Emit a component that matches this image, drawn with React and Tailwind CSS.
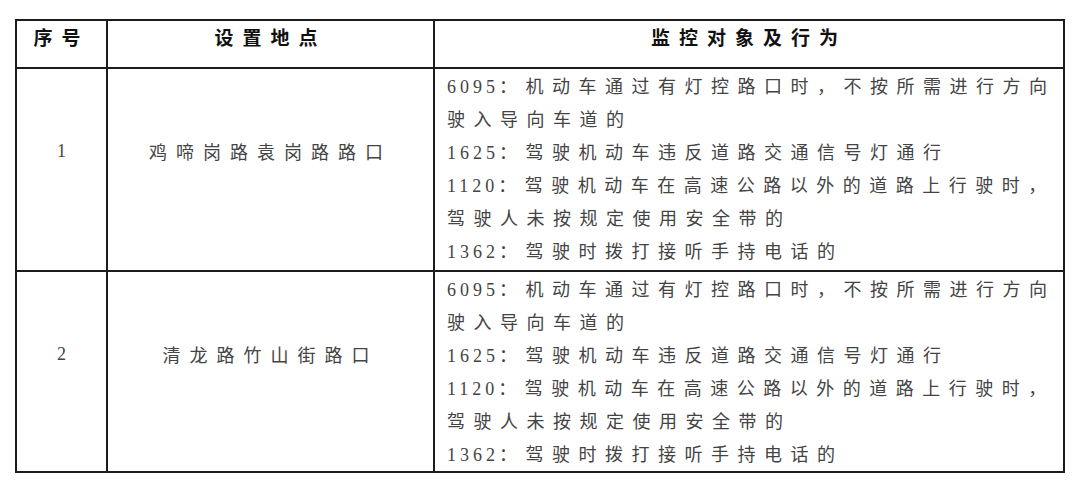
import React from "react";

const CJK = { fontFamily: '"Noto Sans CJK SC", "Noto Sans", sans-serif' };

function Line({ code, text }) {
  return (
    <div className="h-[33px] leading-[33px] whitespace-nowrap">
      {code ? (
        <>
          <span className="font-['Liberation_Serif',serif] text-[18px] tracking-[4px]">{code}</span>
          <span className="tracking-[8.5px]">：</span>
        </>
      ) : null}
      <span className="tracking-[8.5px]">{text}</span>
    </div>
  );
}

const rows = [
  { no: "1", place: "鸡啼岗路袁岗路路口", pb: "pb-[3px]" },
  { no: "2", place: "清龙路竹山街路口", pb: "pb-[1px]" },
];

const lines = [
  { code: "6095", text: "机动车通过有灯控路口时，不按所需进行方向" },
  { code: null, text: "驶入导向车道的" },
  { code: "1625", text: "驾驶机动车违反道路交通信号灯通行" },
  { code: "1120", text: "驾驶机动车在高速公路以外的道路上行驶时，" },
  { code: null, text: "驾驶人未按规定使用安全带的" },
  { code: "1362", text: "驾驶时拨打接听手持电话的" },
];

export default function App() {
  return (
    <div className="w-[1080px] h-[492px] bg-white pt-[19px] pl-[15px]" style={CJK}>
      <div className="w-[1050px] border-2 border-[#1c1c1c]">
        <div className="grid grid-cols-[89px_327px_1fr] h-[46px]">
          <div className="flex justify-center pt-[1px] text-[19px] font-bold text-[#111] tracking-[9px] leading-[30px]">序号</div>
          <div className="flex justify-center border-l-2 border-[#1c1c1c] pt-[1px] text-[19px] font-bold text-[#111] tracking-[9px] leading-[30px]">设置地点</div>
          <div className="flex justify-center border-l-2 border-[#1c1c1c] pt-[1px] text-[19px] font-bold text-[#111] tracking-[9px] leading-[30px]">监控对象及行为</div>
        </div>
        {rows.map((r) => (
          <div key={r.no} className="grid grid-cols-[89px_327px_1fr] border-t-2 border-[#1c1c1c]">
            <div className="flex justify-center pt-[66px] text-[18px] leading-[33px] text-[#444] font-['Liberation_Serif',serif]">
              {r.no}
            </div>
            <div className="flex justify-center border-l-2 border-[#1c1c1c] pt-[66px] text-[18px] leading-[33px] text-[#444] tracking-[9px]">
              {r.place}
            </div>
            <div className={`border-l-2 border-[#1c1c1c] pl-[12px] text-[18px] text-[#444] ${r.pb}`}>
              {lines.map((l, i) => (
                <Line key={i} code={l.code} text={l.text} />
              ))}
            </div>
          </div>
        ))}
      </div>
    </div>
  );
}
